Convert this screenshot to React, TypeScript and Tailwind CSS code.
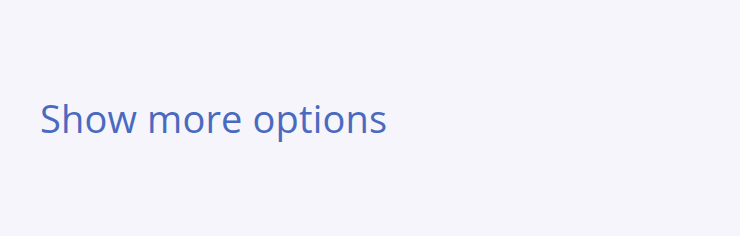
export default function App() {
  return (
    <div className="w-[740px] h-[236px] bg-[#f5f5fb] flex items-center px-10">
      <button className="text-[#4a6abf] text-[38px] font-['Open_Sans',sans-serif] leading-none tracking-[0.15px] pb-[1px]">
        Show more options
      </button>
    </div>
  )
}
